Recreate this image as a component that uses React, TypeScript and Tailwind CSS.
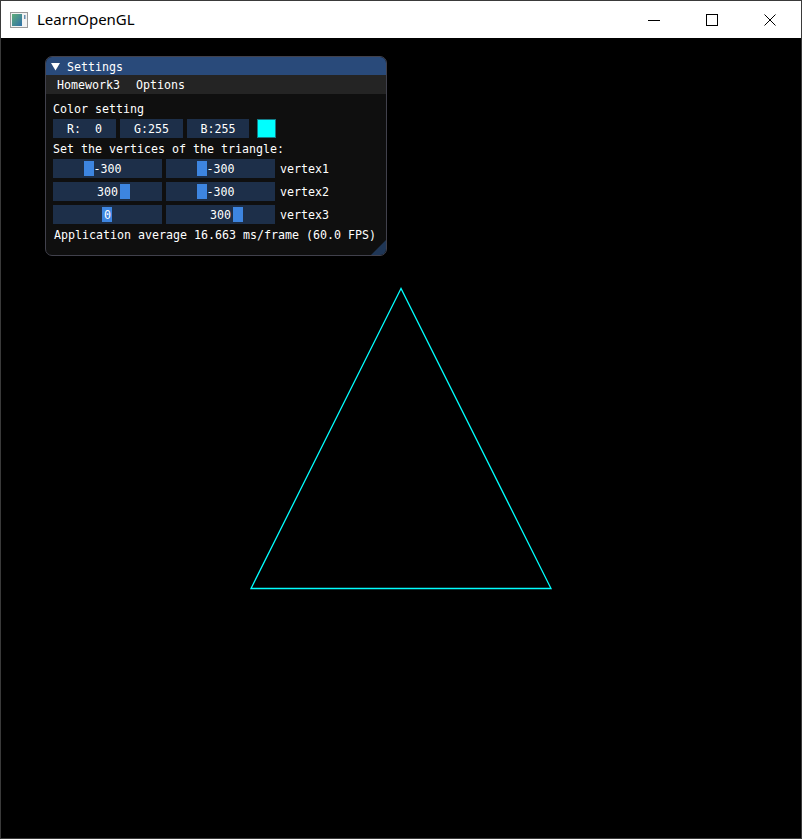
import React from "react";

const mono = "font-['DejaVu_Sans_Mono','Liberation_Mono',monospace] text-[11.63px] leading-[13px] text-white translate-y-[1px]";

function AppIcon() {
  return (
    <svg width="18" height="16" viewBox="0 0 18 16" className="shrink-0">
      <defs>
        <linearGradient id="gl" x1="0" y1="0" x2="1" y2="1">
          <stop offset="0" stopColor="#5fae7a" />
          <stop offset="1" stopColor="#2f6fa8" />
        </linearGradient>
      </defs>
      <rect x="0.5" y="0.5" width="17" height="15" fill="#f2f2f2" stroke="#9a9a9a" />
      <rect x="2" y="2" width="10" height="12" fill="url(#gl)" />
      <rect x="14" y="3" width="1.5" height="4" fill="#6a8fb0" />
    </svg>
  );
}

function TitleBar() {
  return (
    <div className="h-[37px] flex items-center bg-white">
      <div className="pl-[9px] pr-[9px] flex items-center">
        <AppIcon />
      </div>
      <span className="font-['Segoe_UI','Noto_Sans',sans-serif] text-[15px] text-black -mt-[1px]">LearnOpenGL</span>
      <div className="ml-auto flex h-full pr-[2px]">
        <div className="w-[58px] flex items-center justify-center">
          <svg width="12" height="12" viewBox="0 0 12 12">
            <line x1="0" y1="6.5" x2="12" y2="6.5" stroke="#000" strokeWidth="1" />
          </svg>
        </div>
        <div className="w-[58px] flex items-center justify-center">
          <svg width="12" height="12" viewBox="0 0 12 12">
            <rect x="0.5" y="0.5" width="11" height="11" fill="none" stroke="#000" strokeWidth="1" />
          </svg>
        </div>
        <div className="w-[58px] flex items-center justify-center">
          <svg width="12" height="12" viewBox="0 0 12 12">
            <path d="M0.5 0.5 L11.5 11.5 M11.5 0.5 L0.5 11.5" stroke="#000" strokeWidth="1" />
          </svg>
        </div>
      </div>
    </div>
  );
}

function Frame({ w, children }: { w: string; children: React.ReactNode }) {
  return (
    <div className={`${w} h-[19px] bg-[#1d2f49] flex items-center justify-center`}>
      <span className={mono + " whitespace-pre"}>{children}</span>
    </div>
  );
}

function Slider({ value, grab }: { value: string; grab: number }) {
  return (
    <div className="relative w-[109px] h-[19px] bg-[#1d2f49] flex items-center justify-center">
      <div className="absolute top-[2px] h-[15px] w-[10px] bg-[#3d85e0]" style={{ left: grab }} />
      <span className={mono + " relative"}>{value}</span>
    </div>
  );
}

const grabFor: Record<string, number> = { "-300": 31, "0": 49, "300": 67 };

function SliderRow({ a, b, label }: { a: string; b: string; label: string }) {
  return (
    <div className="flex items-center gap-[4px]">
      <Slider value={a} grab={grabFor[a]} />
      <Slider value={b} grab={grabFor[b]} />
      <span className={mono + " ml-[1px]"}>{label}</span>
    </div>
  );
}

function SettingsPanel() {
  return (
    <div className="absolute left-[44px] top-[18px] w-[342px] h-[200px] rounded-[7px] border border-[#41414c] bg-[#0f0f0f] overflow-hidden flex flex-col">
      <div className="h-[18px] bg-[#294a7a] flex items-center pl-[5px]">
        <svg width="9" height="8" viewBox="0 0 9 8" className="shrink-0 translate-y-[1px]">
          <polygon points="0,0 9,0 4.5,7.5" fill="#fff" />
        </svg>
        <span className={mono + " ml-[7px]"}>Settings</span>
      </div>
      <div className="h-[19px] bg-[#242424] flex items-center pl-[7px] gap-[8px]">
        <span className={mono + " px-[4px]"}>Homework3</span>
        <span className={mono + " px-[4px]"}>Options</span>
      </div>
      <div className="flex flex-col gap-[4px] pt-[8px] pl-[7px]">
        <span className={mono}>Color setting</span>
        <div className="flex items-center gap-[4px]">
          <Frame w="w-[63px]">{"R:  0"}</Frame>
          <Frame w="w-[63px]">G:255</Frame>
          <Frame w="w-[62px]">B:255</Frame>
          <div className="ml-[4px] w-[19px] h-[19px] bg-[#00ffff] border border-[#137a86]" />
        </div>
        <span className={mono}>Set the vertices of the triangle:</span>
        <SliderRow a="-300" b="-300" label="vertex1" />
        <SliderRow a="300" b="-300" label="vertex2" />
        <SliderRow a="0" b="300" label="vertex3" />
        <span className={mono + " ml-[1px]"}>Application average 16.663 ms/frame (60.0 FPS)</span>
      </div>
      <svg width="15" height="15" viewBox="0 0 15 15" className="absolute right-0 bottom-0">
        <polygon points="15,0 15,15 0,15" fill="#1f3656" />
      </svg>
    </div>
  );
}

export default function App() {
  return (
    <div className="w-[802px] h-[839px] border border-[#3a3a3a] bg-white flex flex-col">
      <TitleBar />
      <div className="relative h-[800px] bg-black">
        <svg width="800" height="800" className="absolute inset-0">
          <polygon points="400,250.5 250,550.5 550,550.5" fill="none" stroke="#00ffff" strokeWidth="1.3" />
        </svg>
        <SettingsPanel />
      </div>
    </div>
  );
}
